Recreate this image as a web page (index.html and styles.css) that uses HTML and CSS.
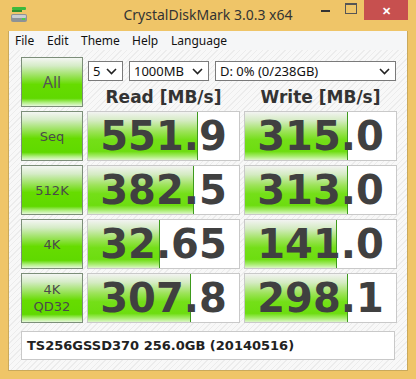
FILE: index.html
```html
<!DOCTYPE html>
<html lang="en">
<head>
<meta charset="UTF-8">
<title>CrystalDiskMark 3.0.3 x64</title>
<link rel="stylesheet" href="styles.css">
</head>
<body>
<div class="window">
<div class="titlebar">
<svg class="app-icon" width="18" height="18" viewBox="0 0 18 18">
<rect x="2" y="1" width="14" height="3" rx="1" fill="#3cb93c"/>
<rect x="2" y="4" width="10" height="2" fill="#2e8f2e"/>
<rect x="1" y="8" width="16" height="8" rx="2" fill="#8d9296"/>
<rect x="2" y="9" width="14" height="3" rx="1" fill="#c9cdd0"/>
<rect x="12" y="12" width="3" height="2" fill="#4ad04a"/>
</svg>
<span class="title">CrystalDiskMark 3.0.3 x64</span>
<div class="controls">
<span class="ctl min"></span>
<span class="ctl max"></span>
<span class="ctl close">&#x2715;</span>
</div>
</div>
<div class="client">
<div class="menubar">
<span>File</span><span>Edit</span><span>Theme</span><span>Help</span><span>Language</span>
</div>
<div class="content">
<div class="grid">
<div class="btn btn-all">All</div>
<div class="top">
<div class="selects">
<div class="sel sel-count">5<svg class="chev" width="11" height="7" viewBox="0 0 11 7"><path d="M1 1 L5.5 5.5 L10 1" fill="none" stroke="#222" stroke-width="1.6"/></svg></div>
<div class="sel sel-size">1000MB<svg class="chev" width="11" height="7" viewBox="0 0 11 7"><path d="M1 1 L5.5 5.5 L10 1" fill="none" stroke="#222" stroke-width="1.6"/></svg></div>
<div class="sel sel-drive">D: 0% (0/238GB)<svg class="chev" width="11" height="7" viewBox="0 0 11 7"><path d="M1 1 L5.5 5.5 L10 1" fill="none" stroke="#222" stroke-width="1.6"/></svg></div>
</div>
<div class="heads">
<div class="head">Read [MB/s]</div>
<div class="head">Write [MB/s]</div>
</div>
</div>

<div class="btn">Seq</div>
<div class="meter"><div class="fill" style="width:73%"></div><span class="val">551.9</span></div>
<div class="meter"><div class="fill" style="width:68%"></div><span class="val">315.0</span></div>

<div class="btn">512K</div>
<div class="meter"><div class="fill" style="width:70%"></div><span class="val">382.5</span></div>
<div class="meter"><div class="fill" style="width:68%"></div><span class="val">313.0</span></div>

<div class="btn">4K</div>
<div class="meter"><div class="fill" style="width:48%"></div><span class="val">32.65</span></div>
<div class="meter"><div class="fill" style="width:61%"></div><span class="val">141.0</span></div>

<div class="btn btn-two">4K<br>QD32</div>
<div class="meter"><div class="fill" style="width:68%"></div><span class="val">307.8</span></div>
<div class="meter"><div class="fill" style="width:68%"></div><span class="val">298.1</span></div>
</div>
<div class="info">TS256GSSD370 256.0GB (20140516)</div>
</div>
</div>
</div>
</body>
</html>
```
FILE: styles.css
```css
* {box-sizing: border-box;margin: 0;padding: 0;}
body {width: 416px;height: 379px;overflow: hidden;font-family: "Noto Sans", sans-serif;}
.window {width: 416px;height: 379px;background: #efc568;padding: 0 8px 8px 8px;display: flex;flex-direction: column;}
.titlebar {height: 31px;position: relative;display: flex;align-items: center;justify-content: center;flex-shrink: 0;}
.app-icon {position: absolute;left: 2px;top: 6px;}
.title {font-family: "Noto Sans", sans-serif;font-size: 14px;color: #333;margin-top: -2px;}
.controls {position: absolute;right: 0;top: 0;display: flex;height: 20px;}
.ctl {display: flex;align-items: center;justify-content: center;height: 20px;}
.min {width: 26px;}
.min::after {content: "";width: 9px;height: 2px;background: #333;margin-top: 2px;}
.max {width: 26px;}
.max::after {content: "";width: 10px;height: 8px;border: 1px solid #555;border-top-width: 2px;margin-top: -4px;}
.close {width: 44px;background: #c7504f;color: #fff;font-size: 11px;font-weight: bold;}
.client {flex: 1;display: flex;flex-direction: column;border: 1px solid #c9a95c;border-top: none;}
.menubar {height: 19px;background: #f5f6f7;display: flex;align-items: center;padding-left: 6px;font-size: 12px;color: #111;flex-shrink: 0;}
.menubar span:nth-child(1) {width: 32px;}
.menubar span:nth-child(2) {width: 34px;}
.menubar span:nth-child(3) {width: 51px;}
.menubar span:nth-child(4) {width: 39px;}
.content {flex: 1;padding: 7px 11px 0 12px;background-color: #f8f8f8;background-image: repeating-linear-gradient(135deg, #f8f8f8 0px, #f8f8f8 3px, #ececec 3px, #ececec 4px);}
.grid {display: grid;grid-template-columns: 62px 153px 153px;grid-template-rows: 50px repeat(4, 50px);column-gap: 4px;row-gap: 4px;}
.btn {border: 1px solid #7c8e79;background: linear-gradient(#f4f6f3 0%, #d6ecc8 16%, #98e258 38%, #66dc00 55%, #60d900 84%, #b2ef84 93%, #e6f8da 100%);display: flex;align-items: center;justify-content: center;text-align: center;font-family: "DejaVu Sans", sans-serif;font-size: 13px;color: #4a4a4a;line-height: 17px;}
.btn-all {font-family: "Noto Sans", sans-serif;font-size: 16px;color: #555;}
.top {grid-column: 2 / 4;display: flex;flex-direction: column;}
.selects {display: flex;margin-top: 4px;margin-left: 1px;height: 20px;}
.sel {background: #fff;border: 1px solid #7a7a7a;height: 20px;display: flex;align-items: center;justify-content: space-between;padding: 0 5px 0 4px;font-family: "Noto Sans", sans-serif;font-size: 13px;color: #111;margin-right: 6px;}
.sel-count {width: 35px;}
.sel-size {width: 80px;}
.sel-drive {width: 181px;margin-right: 0;}
.heads {display: grid;grid-template-columns: 153px 153px;column-gap: 4px;margin-top: 6px;}
.head {text-align: center;font-family: "DejaVu Sans", sans-serif;font-weight: bold;font-size: 17px;color: #333;line-height: 21px;}
.meter {position: relative;background: #fff;border: 1px solid #c9c9c9;display: flex;align-items: center;justify-content: center;overflow: hidden;}
.fill {position: absolute;left: 0;top: 0;bottom: 0;border-right: 1px solid #3d9a1c;background: linear-gradient(#f2f3f1 0%, #d4ebc2 18%, #9de35a 40%, #74df18 58%, #6ddd10 82%, #a6ec6c 92%, #dcf6c8 100%);}
.val {position: relative;font-family: "DejaVu Sans", sans-serif;font-weight: bold;font-size: 40px;color: #404040;line-height: 48px;}
.info {margin-top: 8px;height: 29px;width: 374px;background: #fff;border: 1px solid #c9c9c9;display: flex;align-items: center;padding-left: 5px;font-family: "DejaVu Sans", sans-serif;font-weight: bold;font-size: 13px;color: #222;}
```
